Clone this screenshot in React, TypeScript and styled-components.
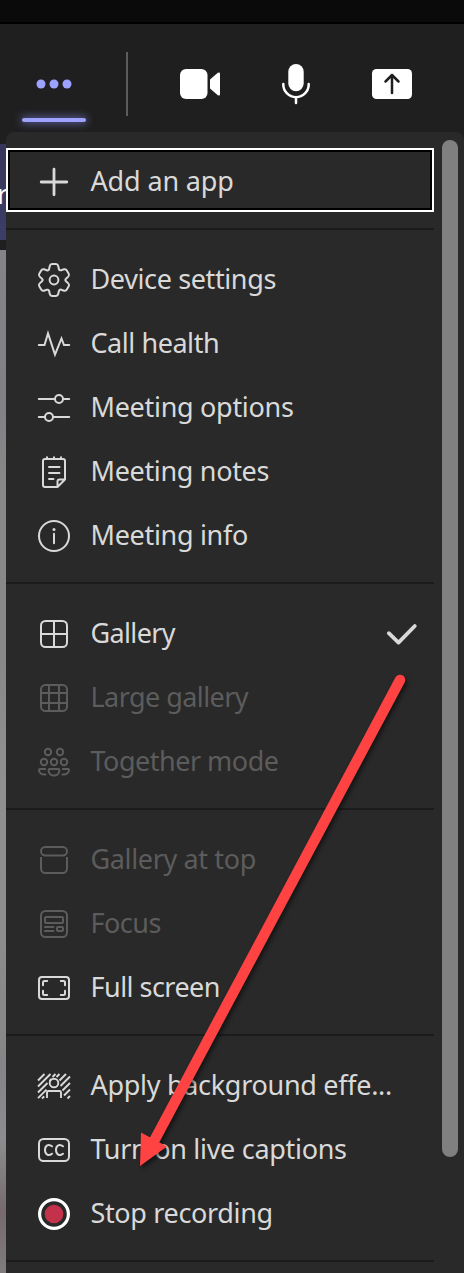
import React from 'react';
import styled, { createGlobalStyle, css } from 'styled-components';

const GlobalStyle = createGlobalStyle`
  *, *::before, *::after { box-sizing: border-box; }
  body { margin: 0; background: #1f1f1f; }
`;

const Screen = styled.div`
  position: relative;
  width: 464px;
  height: 1273px;
  overflow: hidden;
  display: flex;
  flex-direction: column;
  background: #1f1f1f;
  font-family: 'Noto Sans', 'Open Sans', sans-serif;
`;

const TitleStrip = styled.div`
  flex: none;
  height: 24px;
  background: #0a0a0a;
  border-bottom: 2px solid #000;
`;

const Toolbar = styled.header`
  flex: none;
  display: flex;
  align-items: flex-start;
  height: 108px;
  padding-left: 22px;
`;

const MoreButton = styled.div`
  display: flex;
  flex-direction: column;
  justify-content: space-between;
  width: 64px;
  height: 98px;
  padding-top: 44px;
`;

const ActiveBar = styled.span`
  height: 4px;
  border-radius: 2px;
  background: #9ea2ff;
  box-shadow: 0 0 9px 1px rgba(140, 140, 240, 0.65);
`;

const ToolbarRule = styled.span`
  width: 2px;
  height: 64px;
  margin: 28px 52px 0 40px;
  background: #5c5c5c;
`;

const CallControls = styled.div`
  display: flex;
  gap: 56px;
  padding-top: 40px;
`;

const Body = styled.div`
  flex: 1;
  min-height: 0;
  display: flex;
`;

const Stage = styled.aside`
  flex: none;
  width: 6px;
  display: flex;
  flex-direction: column;
  padding-top: 12px;
  overflow: hidden;
`;

const StageBanner = styled.div`
  flex: none;
  display: flex;
  align-items: center;
  height: 96px;
  padding-top: 2px;
  margin-bottom: 10px;
  background: linear-gradient(#36365a, #3d3e66);
  color: #fff;
  font-size: 27px;
  text-indent: -3px;
`;

const StageVideo = styled.div`
  flex: 1;
  background: linear-gradient(#858389 0%, #827f86 14%, #8a8988 24%, #8a8887 40%, #92908e 52%, #8d8c8a 68%, #858488 80%, #8c8d90 87%, #766a6c 94%, #807b7c 100%);
`;

const Menu = styled.nav`
  flex: 1;
  min-width: 0;
  display: flex;
  justify-content: space-between;
  padding: 8px 6px 0 0;
  border-radius: 8px 8px 0 0;
  background: #292929;
`;

const MenuList = styled.div`
  width: 428px;
  padding-top: 8px;
`;

const Scrollbar = styled.div`
  width: 16px;
  height: 1017px;
  border-radius: 8px;
  background: #808080;
`;

const Group = styled.section`
  padding-bottom: 14px;
  border-bottom: 2px solid #1b1b1b;
  margin-bottom: 18px;
`;

const MenuItem = styled.div<{ $disabled?: boolean; $focused?: boolean }>`
  display: flex;
  align-items: center;
  height: 64px;
  padding: 0 16px 0 32px;
  color: ${(p) => (p.$disabled ? '#5c5c5c' : '#d9d9d9')};
  ${(p) =>
    p.$focused &&
    css`
      margin-bottom: 2px;
      padding: 4px 14px 0 30px;
      border: 2px solid #fff;
      box-shadow: inset 0 0 0 2px #000;
    `}
`;

const Label = styled.span<{ $spacing: number }>`
  flex: 1;
  margin-left: 20.5px;
  padding-bottom: 2px;
  font-size: 27px;
  line-height: 36px;
  letter-spacing: ${(p) => p.$spacing}px;
  white-space: nowrap;
`;

const Glyph = styled.svg`
  flex: none;
  display: block;
  overflow: visible;
`;

const ArrowOverlay = styled.svg`
  position: absolute;
  inset: 0;
  pointer-events: none;
  filter: drop-shadow(2px 3px 2px rgba(0, 0, 0, 0.5));
`;

function LineIcon({ children, weight = 2 }: { children: React.ReactNode; weight?: number }) {
  return (
    <Glyph width="32" height="32" viewBox="0 0 32 32" fill="none" stroke="currentColor" strokeWidth={weight} strokeLinecap="round" strokeLinejoin="round">
      {children}
    </Glyph>
  );
}

/* Six-toothed outline with every corner softened by a quadratic curve. */
function gearOutline(): string {
  const tooth: [number, number][] = [[-3.8, -15.9], [3.8, -15.9], [5.3, -9.2]];
  const pts: [number, number][] = [];
  for (let k = 0; k < 6; k++) {
    const a = (k * Math.PI) / 3;
    tooth.forEach(([x, y]) => {
      pts.push([16 + x * Math.cos(a) - y * Math.sin(a), 16 + x * Math.sin(a) + y * Math.cos(a)]);
    });
  }
  const toward = (p: [number, number], q: [number, number], d: number) => {
    const len = Math.hypot(q[0] - p[0], q[1] - p[1]);
    return `${p[0] + ((q[0] - p[0]) * d) / len} ${p[1] + ((q[1] - p[1]) * d) / len}`;
  };
  return (
    pts
      .map((p, i) => {
        const prev = pts[(i + pts.length - 1) % pts.length];
        const next = pts[(i + 1) % pts.length];
        return `${i ? 'L' : 'M'}${toward(p, prev, 1.9)}Q${p[0]} ${p[1]} ${toward(p, next, 1.9)}`;
      })
      .join('') + 'Z'
  );
}

const icons = {
  add: <LineIcon weight={2.8}><path d="M16 3.2v25.6M3.2 16h25.6" /></LineIcon>,
  settings: <LineIcon><path d={gearOutline()} /><circle cx="16" cy="16" r="4.4" /></LineIcon>,
  health: <LineIcon><path strokeLinejoin="miter" d="M.8 17h5.7L10 5.4 17 26.6 23.5 10.500 26 17h5.2" /></LineIcon>,
  options: (
    <LineIcon>
      <path d="M.8 7H17M25 7h6.2M.8 25H7M15 25h16.2" />
      <circle cx="21" cy="7" r="4" /><circle cx="11" cy="25" r="4" />
    </LineIcon>
  ),
  notes: (
    <LineIcon>
      <path d="M19.5 31H7a2 2 0 0 1-2-2V5a2 2 0 0 1 2-2h18a2 2 0 0 1 2 2v18.500zM19.500 31v-5.500a2 2 0 0 1 2-2H27M9 1.200v1.500M16 1.200v1.500M23 1.200v1.500M11 11h10.500M11 17h10.500M11 23h4.500" />
    </LineIcon>
  ),
  info: (
    <LineIcon>
      <circle cx="16" cy="16" r="15" /><path d="M16 13.8v9.4" />
      <circle cx="16" cy="9.4" r="1.5" fill="currentColor" stroke="none" />
    </LineIcon>
  ),
  gallery: <LineIcon><rect x="3" y="3" width="26" height="26" rx="4.5" /><path d="M16 3v26M3 16h26" /></LineIcon>,
  largeGallery: <LineIcon><rect x="3" y="3" width="26" height="26" rx="4.5" /><path d="M11 3v26M21 3v26M3 11h26M3 21h26" /></LineIcon>,
  together: (
    <LineIcon>
      <circle cx="10" cy="6" r="3.2" /><circle cx="22" cy="6" r="3.2" />
      <circle cx="6" cy="16" r="3.2" /><circle cx="16" cy="16" r="3.2" /><circle cx="26" cy="16" r="3.2" />
      <path d="M11.6 23h8.8a1 1 0 0 1 1 1c0 3.2-2.2 5.500-5.400 5.500s-5.400-2.300-5.400-5.500a1 1 0 0 1 1-1zM7.200 23H2a1 1 0 0 0-1 1c0 3 2.500 5 6.500 4.500M24.800 23H30a1 1 0 0 1 1 1c0 3-2.500 5-6.500 4.500" />
    </LineIcon>
  ),
  galleryTop: <LineIcon><rect x="3" y="3" width="26" height="8.5" rx="4.2" /><path strokeLinecap="butt" d="M3 13v11.5A4.500 4.500 0 0 0 7.500 29h17a4.500 4.500 0 0 0 4.500-4.500V13" /></LineIcon>,
  focus: (
    <LineIcon>
      <rect x="3" y="3" width="26" height="26" rx="4.5" />
      <rect x="7" y="9" width="18" height="6" rx="1" /><rect x="19" y="19" width="6" height="4" rx="1" />
      <path d="M7 19h8.500M7 23h8.500" />
    </LineIcon>
  ),
  fullScreen: (
    <LineIcon>
      <rect x="1" y="5" width="30" height="22" rx="3" />
      <path d="M9.200 9H6.500A1.500 1.500 0 0 0 5 10.500v2.700M22.800 9h2.700a1.500 1.500 0 0 1 1.500 1.500v2.700M9.200 23H6.500A1.500 1.500 0 0 1 5 21.500v-2.700M22.800 23h2.700a1.500 1.500 0 0 0 1.500-1.500v-2.700" />
    </LineIcon>
  ),
  effects: (
    <LineIcon weight={1.9}>
      <circle cx="16" cy="13" r="4.300" />
      <path strokeLinecap="butt" d="M9 28v-5.500a1.500 1.500 0 0 1 1.500-1.500h11a1.500 1.500 0 0 1 1.500 1.500V28M0 10.500L6.500 4M0 16.500L12.500 4M0 22.500L9.500 13M13.500 9L11.500 11M14.500 7L17.500 4M0 28.200L8.500 19.700M4 28.500L6.200 26.300M18.500 7L21.500 4M21.500 10.500L28 4M22.500 16L32 6.500M24.500 20.500L32 13M26 25.500L32 19.500M29.500 28.500L32 26" />
    </LineIcon>
  ),
  captions: (
    <LineIcon>
      <rect x="1" y="5" width="30" height="22" rx="4.5" />
      <path d="M14 12.300C10.500 9.500 7 11.500 7 16s3.500 6.500 7 3.700M25 12.300C21.500 9.500 18 11.500 18 16s3.500 6.500 7 3.700" />
    </LineIcon>
  ),
  record: (
    <Glyph width="32" height="32" viewBox="0 0 32 32">
      <circle cx="16" cy="16" r="14.4" fill="none" stroke="#fff" strokeWidth="3.2" />
      <circle cx="16" cy="16" r="9.3" fill="#c4314b" />
    </Glyph>
  ),
};

interface Entry {
  icon: keyof typeof icons;
  text: string;
  spacing: number;
  disabled?: boolean;
  focused?: boolean;
  checked?: boolean;
}

const groups: Entry[][] = [
  [{ icon: 'add', text: 'Add an app', spacing: -0.15, focused: true }],
  [
    { icon: 'settings', text: 'Device settings', spacing: -0.38 },
    { icon: 'health', text: 'Call health', spacing: -0.45 },
    { icon: 'options', text: 'Meeting options', spacing: -0.3 },
    { icon: 'notes', text: 'Meeting notes', spacing: -0.33 },
    { icon: 'info', text: 'Meeting info', spacing: -0.32 },
  ],
  [
    { icon: 'gallery', text: 'Gallery', spacing: -0.65, checked: true },
    { icon: 'largeGallery', text: 'Large gallery', spacing: -0.56, disabled: true },
    { icon: 'together', text: 'Together mode', spacing: -0.5, disabled: true },
  ],
  [
    { icon: 'galleryTop', text: 'Gallery at top', spacing: -0.36, disabled: true },
    { icon: 'focus', text: 'Focus', spacing: -0.5, disabled: true },
    { icon: 'fullScreen', text: 'Full screen', spacing: -0.53 },
  ],
  [
    { icon: 'effects', text: 'Apply background effe...', spacing: -0.3 },
    { icon: 'captions', text: 'Turn on live captions', spacing: -0.3 },
    { icon: 'record', text: 'Stop recording', spacing: -0.35 },
  ],
];

export default function App() {
  return (
    <>
      <GlobalStyle />
      <Screen>
        <TitleStrip />
        <Toolbar>
          <MoreButton>
            <Glyph width="64" height="32" viewBox="0 0 64 32" fill="#9ea2ff">
              <circle cx="19" cy="16" r="4.5" /><circle cx="32" cy="16" r="4.5" /><circle cx="45" cy="16" r="4.5" />
            </Glyph>
            <ActiveBar />
          </MoreButton>
          <ToolbarRule />
          <CallControls>
            <Glyph width="40" height="40" viewBox="0 0 40 40" fill="#fff">
              <rect y="5" width="27.5" height="30" rx="6" />
              <path d="M30 15.500l7.800-6.700Q40 7.600 40 9.800v20.400q0 2.200-2.200 1L30 24.500z" />
            </Glyph>
            <Glyph width="40" height="40" viewBox="0 0 40 40" fill="#fff">
              <rect x="12.3" y="0" width="15.4" height="27.3" rx="7.7" />
              <path d="M7.300 20v.5a12.700 12.700 0 0 0 25.400 0V20M20 33.500v5.500" fill="none" stroke="#fff" strokeWidth="2.5" strokeLinecap="round" />
            </Glyph>
            <Glyph width="40" height="40" viewBox="0 0 40 40" fill="#fff">
              <rect x="0" y="5" width="40" height="30" rx="4.5" />
              <path d="M20 29V11M13.500 17.500L20 11l6.500 6.500" fill="none" stroke="#1f1f1f" strokeWidth="2.5" strokeLinecap="round" strokeLinejoin="round" />
            </Glyph>
          </CallControls>
        </Toolbar>
        <Body>
          <Stage>
            <StageBanner>r</StageBanner>
            <StageVideo />
          </Stage>
          <Menu>
            <MenuList>
              {groups.map((entries) => (
                <Group key={entries[0].text}>
                  {entries.map((e) => (
                    <MenuItem key={e.text} $disabled={e.disabled} $focused={e.focused}>
                      {icons[e.icon]}
                      <Label $spacing={e.spacing}>{e.text}</Label>
                      {e.checked && (
                        <Glyph width="32" height="32" viewBox="0 0 32 32" fill="none" stroke="currentColor" strokeWidth="3.8" strokeLinecap="round" strokeLinejoin="round">
                          <path d="M2.800 15.200L12.500 24.600 28.800 8" />
                        </Glyph>
                      )}
                    </MenuItem>
                  ))}
                </Group>
              ))}
            </MenuList>
            <Scrollbar />
          </Menu>
        </Body>
        <ArrowOverlay width="464" height="1273" viewBox="0 0 464 1273">
          <path d="M400 680L153 1143" stroke="#ff4343" strokeWidth="10.5" strokeLinecap="round" />
          <path d="M140 1166l1-33.500 26 14z" fill="#ff4343" />
        </ArrowOverlay>
      </Screen>
    </>
  );
}
